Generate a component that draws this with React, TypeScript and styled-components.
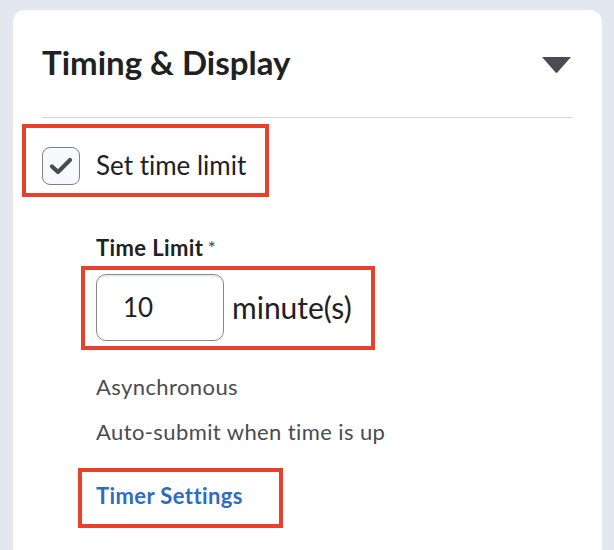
import React from "react";
import styled, { createGlobalStyle } from "styled-components";

const GlobalStyle = createGlobalStyle`
  html, body {
    margin: 0;
    padding: 0;
    background: #e3e8f0;
  }
  body {
    font-family: Lato, "Noto Sans", sans-serif;
    font-variant-ligatures: none;
    color: #202122;
  }
`;

const Page = styled.div`
  padding: 10px 12px 0 13px;
  height: 550px;
  box-sizing: border-box;
  overflow: hidden;
`;

const Card = styled.section`
  background: #ffffff;
  border-radius: 12px 12px 0 0;
  padding: 33px 29px 40px 29px;
  min-height: 600px;
`;

const Header = styled.div`
  display: flex;
  align-items: center;
  justify-content: space-between;
  padding-bottom: 34px;
  border-bottom: 1px solid #d3d6da;
`;

const Title = styled.h2`
  margin: 0;
  font-size: 33px;
  font-weight: 700;
  line-height: 1.2;
  color: #202122;
`;

const Caret = styled.svg`
  width: 29px;
  height: 16px;
  margin-right: 2px;
  margin-top: 4px;
  fill: #494c50;
`;

const Highlight = styled.div<{ $left: number; $pad: string; $top?: number }>`
  display: inline-flex;
  align-items: center;
  border: 4px solid #e9402b;
  margin-left: -${(p) => p.$left}px;
  margin-top: ${(p) => p.$top ?? 0}px;
  padding: ${(p) => p.$pad};
`;

const CheckRow = styled.label`
  display: flex;
  align-items: center;
  gap: 16px;
  font-size: 26px;
  line-height: 1.2;
  color: #202122;
`;

const Box = styled.span`
  width: 36px;
  height: 36px;
  border: 1px solid #7c8186;
  border-radius: 8px;
  background: #f7f9fe;
  display: flex;
  align-items: center;
  justify-content: center;
`;

const Section = styled.div`
  padding-left: 54px;
  margin-top: 38px;
  display: flex;
  flex-direction: column;
  align-items: flex-start;
`;

const FieldLabel = styled.div`
  font-size: 22px;
  font-weight: 700;
  letter-spacing: 0.4px;
  line-height: 1.2;
  color: #202122;
  margin-bottom: 5px;
`;

const Required = styled.span`
  font-weight: 400;
  font-size: 20px;
  margin-left: 4px;
  vertical-align: top;
  color: #494c50;
`;

const NumberInput = styled.input`
  width: 128px;
  height: 67px;
  box-sizing: border-box;
  border: 1px solid #868a8e;
  border-radius: 10px;
  box-shadow: inset 0 2px 0 0 rgba(177, 185, 190, 0.25);
  padding: 0 0 0 26px;
  font-family: Lato, "Noto Sans", sans-serif;
  font-size: 26px;
  color: #202122;
  background: #ffffff;
  outline: none;
`;

const Unit = styled.span`
  font-size: 30px;
  line-height: 1.2;
  margin-left: 8px;
  color: #202122;
`;

const Note = styled.div<{ $top: number }>`
  font-size: 22px;
  letter-spacing: 0.4px;
  line-height: 1.2;
  color: #494c50;
  margin-top: ${(p) => p.$top}px;
`;

const LinkText = styled.a`
  font-size: 22px;
  font-weight: 700;
  letter-spacing: 0.4px;
  line-height: 1.2;
  color: #2f6cc1;
  text-decoration: none;
`;

const App = (): JSX.Element => (
  <>
    <GlobalStyle />
    <Page>
      <Card>
        <Header>
          <Title>Timing &amp; Display</Title>
          <Caret viewBox="0 0 29 16">
            <path d="M0 0 H29 L15.6 15.2 Q14.5 16.3 13.4 15.2 Z" />
          </Caret>
        </Header>

        <Highlight $left={20} $top={6} $pad="19px 19px 8px 16px">
          <CheckRow>
            <Box>
              <svg width="24" height="18" viewBox="0 0 24 18">
                <path
                  d="M3 9.5 L9 15 L21 3"
                  fill="none"
                  stroke="#494c50"
                  strokeWidth="4.2"
                  strokeLinecap="round"
                  strokeLinejoin="round"
                />
              </svg>
            </Box>
            Set time limit
          </CheckRow>
        </Highlight>

        <Section>
          <FieldLabel>
            Time Limit<Required>*</Required>
          </FieldLabel>
          <Highlight $left={15} $pad="4px 19px 5px 11px">
            <NumberInput defaultValue="10" />
            <Unit>minute(s)</Unit>
          </Highlight>

          <Note $top={24}>Asynchronous</Note>
          <Note $top={19}>Auto-submit when time is up</Note>

          <Highlight $left={18} $top={22} $pad="11px 36px 15px 14px">
            <LinkText href="#">Timer Settings</LinkText>
          </Highlight>
        </Section>
      </Card>
    </Page>
  </>
);

export default App;
